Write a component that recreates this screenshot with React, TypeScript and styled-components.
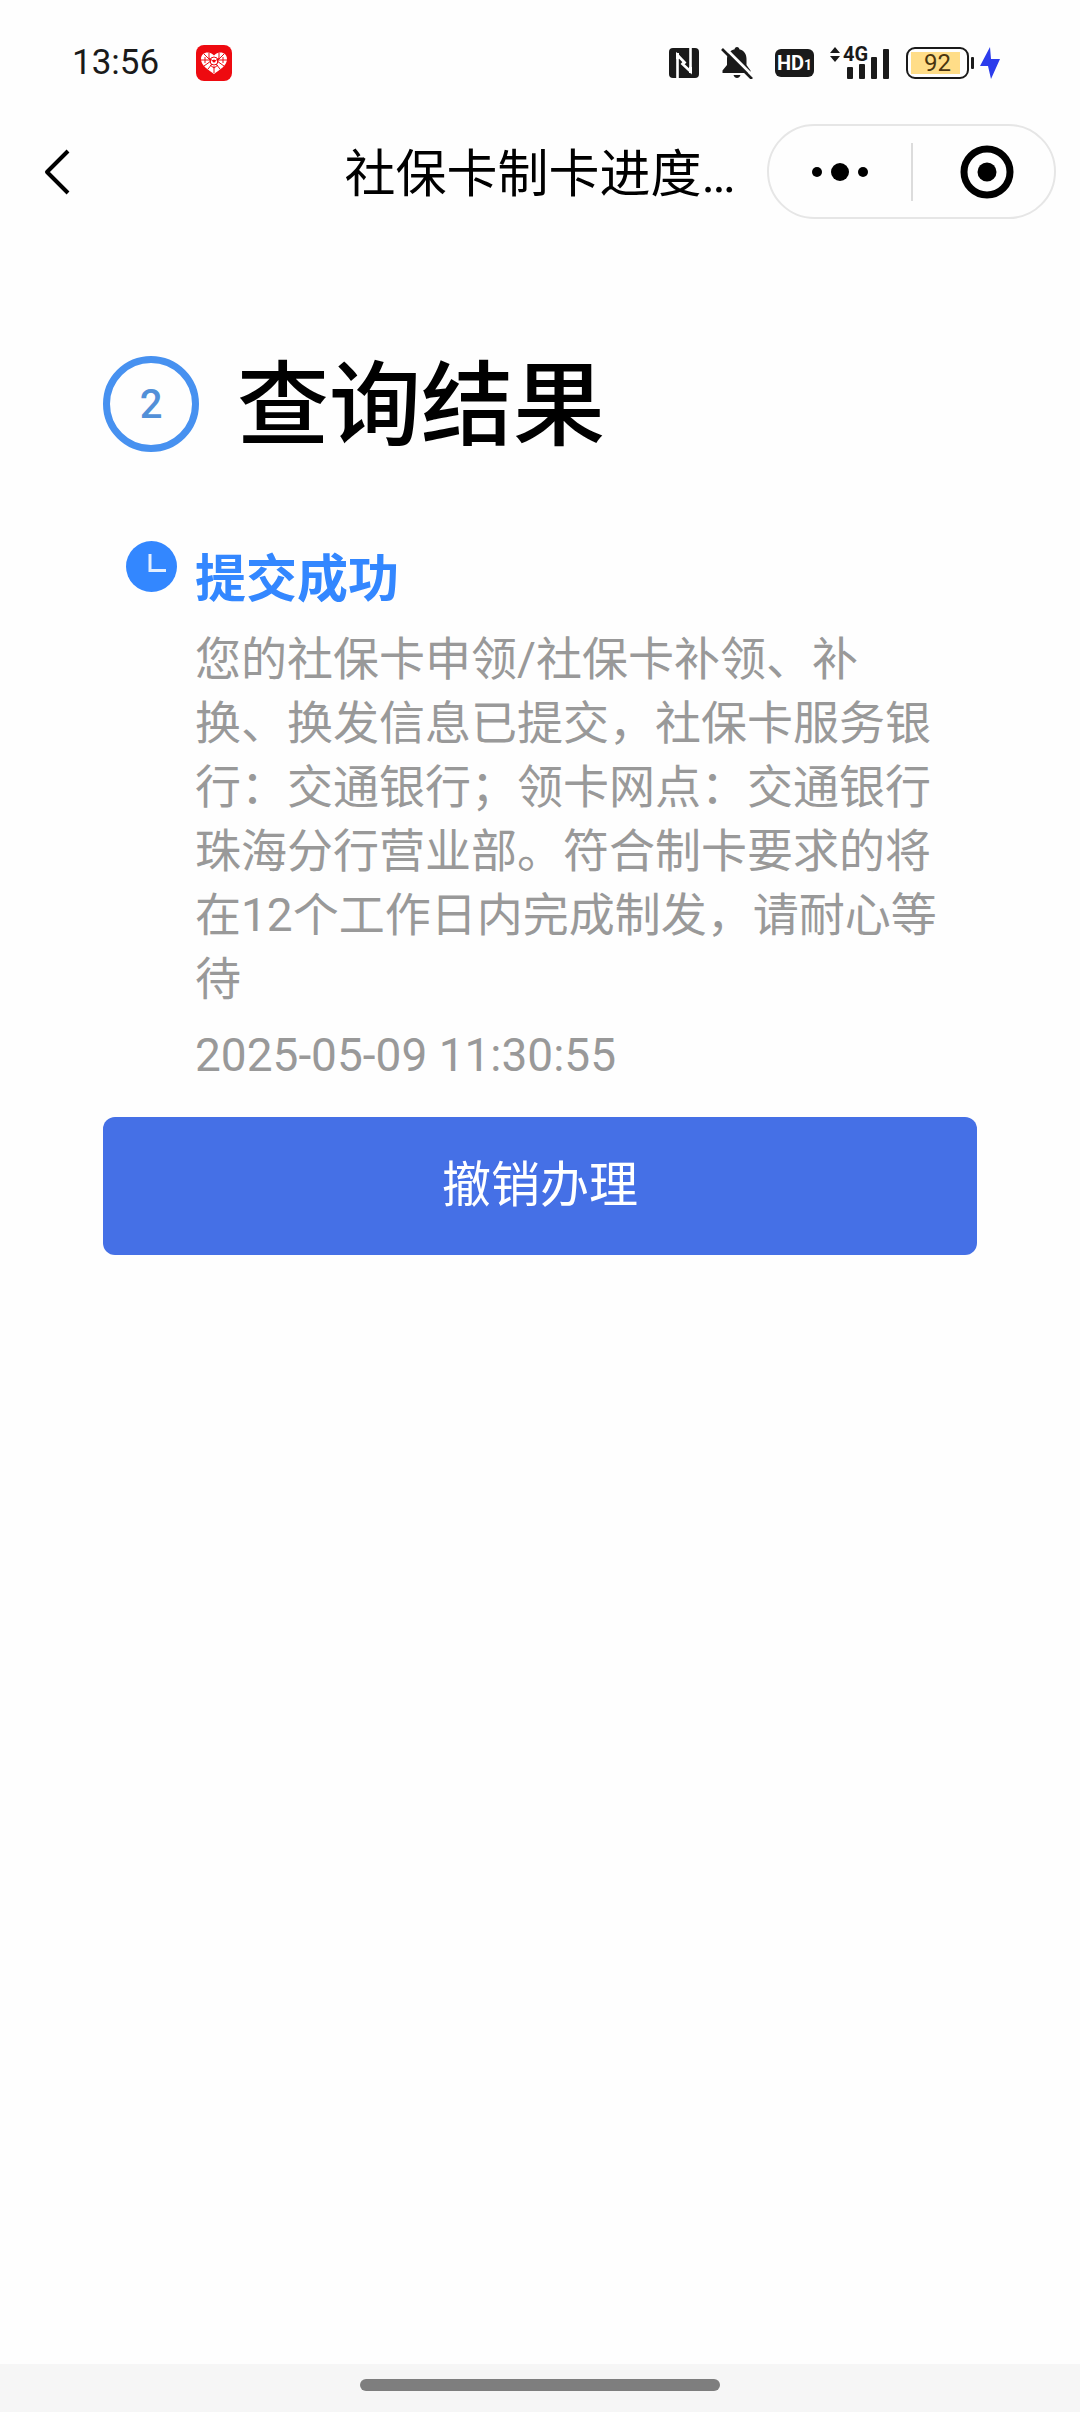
import React from "react";
import styled, { createGlobalStyle } from "styled-components";

const GlobalStyle = createGlobalStyle`
  * { box-sizing: border-box; }
  body {
    margin: 0;
    background: #fefefe;
    color: #000;
    font-family: Roboto, "Noto Sans CJK SC", sans-serif;
  }
  h1, h2, p { margin: 0; font-weight: 400; }
  button { border: 0; padding: 0; background: none; color: inherit; font: inherit; cursor: pointer; }
  svg { display: block; flex: none; }
`;

const Page = styled.div`
  display: flex;
  flex-direction: column;
  min-height: 100vh;
`;

const StatusBar = styled.div`
  display: flex;
  align-items: center;
  justify-content: space-between;
  height: 124px;
  padding: 2px 80px 0 72px;
  color: #1a1a1a;
`;

const StatusGroup = styled.div<{ $gap: number }>`
  display: flex;
  align-items: center;
  gap: ${(p) => p.$gap}px;
`;

const Clock = styled.span`
  font-size: 35px;
  line-height: 40px;
`;

const HdBadge = styled.span`
  display: flex;
  align-items: baseline;
  justify-content: center;
  width: 39px;
  height: 28px;
  border-radius: 6px;
  background: #1a1a1a;
  color: #fff;
  font-size: 20px;
  font-weight: 700;
  line-height: 28px;
`;

const HdIndex = styled.span`
  font-size: 14px;
`;

const Signal = styled.span`
  position: relative;
`;

const NetworkType = styled.span`
  position: absolute;
  top: -1px;
  left: 13px;
  font-size: 20px;
  font-weight: 700;
  line-height: 16px;
`;

const Battery = styled.span`
  display: flex;
  align-items: center;
  gap: 2px;
`;

const BatteryCell = styled.span`
  display: flex;
  width: 63px;
  height: 32px;
  padding: 3px;
  border: 2px solid #1a1a1a;
  border-radius: 9px;
`;

const BatteryLevel = styled.span`
  display: flex;
  align-items: center;
  justify-content: center;
  width: 49px;
  padding-left: 4px;
  background: #fd8;
  color: #4a3510;
  font-size: 24px;
  line-height: 24px;
`;

const BatteryTip = styled.span`
  width: 3px;
  height: 12px;
  border-radius: 1px;
  background: #1a1a1a;
`;

const NavBar = styled.header`
  display: grid;
  grid-template-columns: 1fr auto 1fr;
  align-items: center;
  height: 95px;
`;

const BackButton = styled.button`
  justify-self: start;
  padding: 24px 24px 24px 43px;
`;

const NavTitle = styled.h1`
  padding-top: 6px;
  font-size: 51px;
  line-height: 64px;
`;

const Capsule = styled.div`
  display: flex;
  align-items: center;
  justify-self: end;
  width: 289px;
  height: 95px;
  margin-right: 24px;
  border: 2px solid #e6e6e6;
  border-radius: 48px;
`;

const CapsuleButton = styled.button`
  display: flex;
  flex: 1;
  align-items: center;
  justify-content: center;
  height: 100%;
`;

const MoreButton = styled(CapsuleButton)`
  flex: none;
  width: 142px;
`;

const CapsuleDivider = styled.span`
  width: 2px;
  height: 58px;
  margin-right: 6px;
  background: #dcdcdc;
`;

const Content = styled.main`
  flex: 1;
  padding: 137px 103px 0;
`;

const StepHeader = styled.div`
  display: flex;
  align-items: center;
  gap: 38px;
`;

const StepNumber = styled.span`
  display: flex;
  align-items: center;
  justify-content: center;
  width: 96px;
  height: 96px;
  border: 7px solid #4791f0;
  border-radius: 50%;
  color: #5290d8;
  font-size: 40px;
  font-weight: 500;
`;

const StepTitle = styled.h2`
  padding-top: 6px;
  font-size: 92px;
  font-weight: 500;
  line-height: 90px;
`;

const Progress = styled.section`
  display: flex;
  gap: 18px;
  padding: 89px 35px 0 23px;
`;

const ProgressBody = styled.div`
  flex: 1;
  min-width: 0;
`;

const ProgressTitle = styled.h2`
  margin-top: 7px;
  color: #3387ff;
  font-size: 51px;
  font-weight: 700;
  line-height: 64px;
`;

const ProgressText = styled.p`
  margin-top: 15px;
  color: #999;
  font-size: 46px;
  line-height: 64px;
`;

const ProgressTime = styled.time`
  display: block;
  margin-top: 12px;
  color: #999;
  font-size: 46px;
  line-height: 64px;
`;

const CancelButton = styled.button`
  width: 100%;
  height: 138px;
  margin-top: 30px;
  border-radius: 12px;
  background: #4570e6;
  color: #fff;
  font-size: 49px;
  line-height: 64px;
`;

const GestureBar = styled.footer`
  display: flex;
  justify-content: center;
  height: 48px;
  padding-top: 15px;
  background: #f6f6f6;
`;

const GestureHandle = styled.span`
  width: 360px;
  height: 12px;
  border-radius: 6px;
  background: #7e7e7e;
`;

function HeartAppIcon() {
  return (
    <svg width="36" height="36" viewBox="0 0 36 36">
      <rect width="36" height="36" rx="8" fill="#ee0a10" />
      <path d="M18 10.500C14 5.500 5 6.500 5 14c0 7 8 11 13 15 5-4 13-8 13-15 0-7.500-9-8.500-13-3.500z" fill="#fff" />
      <g stroke="#ee0a10" strokeWidth="1" fill="none">
        <path d="M8 9l7 7M5 15h9M8 21l7-5M13 8v5l4 3M28 9l-7 7M31 15h-9M28 21l-7-5M23 8v5l-4 3M12 24l4-5M24 24l-4-5M18 21v7M9 12v6M27 12v6M14 20l4 3 4-3" />
        <circle cx="18" cy="16" r="4" />
      </g>
      <circle cx="18" cy="16" r="1.500" fill="#ee0a10" />
    </svg>
  );
}

function NfcIcon() {
  return (
    <svg width="30" height="30" viewBox="0 0 30 30">
      <rect width="30" height="30" rx="4" fill="#1a1a1a" />
      <path d="M8.500 30V7l8 8.500M21.500 0v23.500L12.500 15" fill="none" stroke="#fff" strokeWidth="2.600" />
      <path d="M8.500 5v6M21.500 19v6" stroke="#fff" strokeWidth="3" />
    </svg>
  );
}

function MutedBellIcon() {
  return (
    <svg width="32" height="32" viewBox="0 0 32 32">
      <path d="M16 0c1.500 0 2.300 1 2.300 2.200C23 3.200 25.500 7 25.500 12v6l4 5.500V26H1.500v-2.500L6 18v-6c0-5 3-8.800 7.700-9.800C13.700 1 14.500 0 16 0z" fill="#1a1a1a" />
      <path d="M12.500 28h7c-.6 2-1.900 3-3.500 3s-2.900-1-3.500-3z" fill="#1a1a1a" />
      <path d="M3 0l30 30" stroke="#fefefe" strokeWidth="3" />
      <path d="M1 2l30 30" stroke="#1a1a1a" strokeWidth="2.600" />
    </svg>
  );
}

function SignalIcon() {
  return (
    <svg width="60" height="32" viewBox="0 0 60 32" fill="#1a1a1a">
      <path d="M0 6l5-6 5 6zM0 9h10l-5 6z" />
      <rect x="17" y="20" width="6" height="12" rx="1" />
      <rect x="29" y="17" width="6" height="15" rx="1" />
      <rect x="41" y="10" width="6" height="22" rx="1" />
      <rect x="53" y="2" width="6" height="30" rx="1" />
    </svg>
  );
}

function ChargingIcon() {
  return (
    <svg width="20" height="32" viewBox="0 0 20 32">
      <path d="M10 0L0 19h8l3 13 9-20h-9z" fill="#2c3cec" />
    </svg>
  );
}

function BackIcon() {
  return (
    <svg width="28" height="46" viewBox="0 0 28 46" fill="none" stroke="#000" strokeWidth="4" strokeLinejoin="round">
      <path d="M25 2L4 23l21 21" />
    </svg>
  );
}

function MoreIcon() {
  return (
    <svg width="58" height="20" viewBox="0 0 58 20">
      <circle cx="6" cy="10" r="5" />
      <circle cx="29" cy="10" r="9" />
      <circle cx="52" cy="10" r="5" />
    </svg>
  );
}

function TargetIcon() {
  return (
    <svg width="54" height="54" viewBox="0 0 54 54">
      <circle cx="27" cy="27" r="23" fill="none" stroke="#000" strokeWidth="7" />
      <circle cx="27" cy="27" r="9.500" />
    </svg>
  );
}

function ClockIcon() {
  return (
    <svg width="51" height="51" viewBox="0 0 51 51">
      <circle cx="25.500" cy="25.500" r="25.500" fill="#3387ff" />
      <path d="M24 13v16.500h16" fill="none" stroke="#e4efff" strokeWidth="3" />
    </svg>
  );
}

export default function App() {
  return (
    <>
      <GlobalStyle />
      <Page lang="zh-CN">
        <StatusBar>
          <StatusGroup $gap={37}>
            <Clock>13:56</Clock>
            <HeartAppIcon />
          </StatusGroup>
          <StatusGroup $gap={16}>
            <StatusGroup $gap={22}>
              <NfcIcon />
              <MutedBellIcon />
              <HdBadge>
                HD<HdIndex>1</HdIndex>
              </HdBadge>
            </StatusGroup>
            <Signal>
              <SignalIcon />
              <NetworkType>4G</NetworkType>
            </Signal>
            <StatusGroup $gap={6}>
              <Battery>
                <BatteryCell>
                  <BatteryLevel>92</BatteryLevel>
                </BatteryCell>
                <BatteryTip />
              </Battery>
              <ChargingIcon />
            </StatusGroup>
          </StatusGroup>
        </StatusBar>

        <NavBar>
          <BackButton type="button" aria-label="返回">
            <BackIcon />
          </BackButton>
          <NavTitle>社保卡制卡进度…</NavTitle>
          <Capsule>
            <MoreButton type="button" aria-label="更多">
              <MoreIcon />
            </MoreButton>
            <CapsuleDivider />
            <CapsuleButton type="button" aria-label="关闭">
              <TargetIcon />
            </CapsuleButton>
          </Capsule>
        </NavBar>

        <Content>
          <StepHeader>
            <StepNumber>2</StepNumber>
            <StepTitle>查询结果</StepTitle>
          </StepHeader>
          <Progress>
            <ClockIcon />
            <ProgressBody>
              <ProgressTitle>提交成功</ProgressTitle>
              <ProgressText>
                您的社保卡申领/社保卡补领、补换、换发信息已提交，社保卡服务银行：交通银行；领卡网点：交通银行珠海分行营业部。符合制卡要求的将在12个工作日内完成制发，请耐心等待
              </ProgressText>
              <ProgressTime dateTime="2025-05-09T11:30:55">
                2025-05-09 11:30:55
              </ProgressTime>
            </ProgressBody>
          </Progress>
          <CancelButton type="button">撤销办理</CancelButton>
        </Content>

        <GestureBar>
          <GestureHandle />
        </GestureBar>
      </Page>
    </>
  );
}
